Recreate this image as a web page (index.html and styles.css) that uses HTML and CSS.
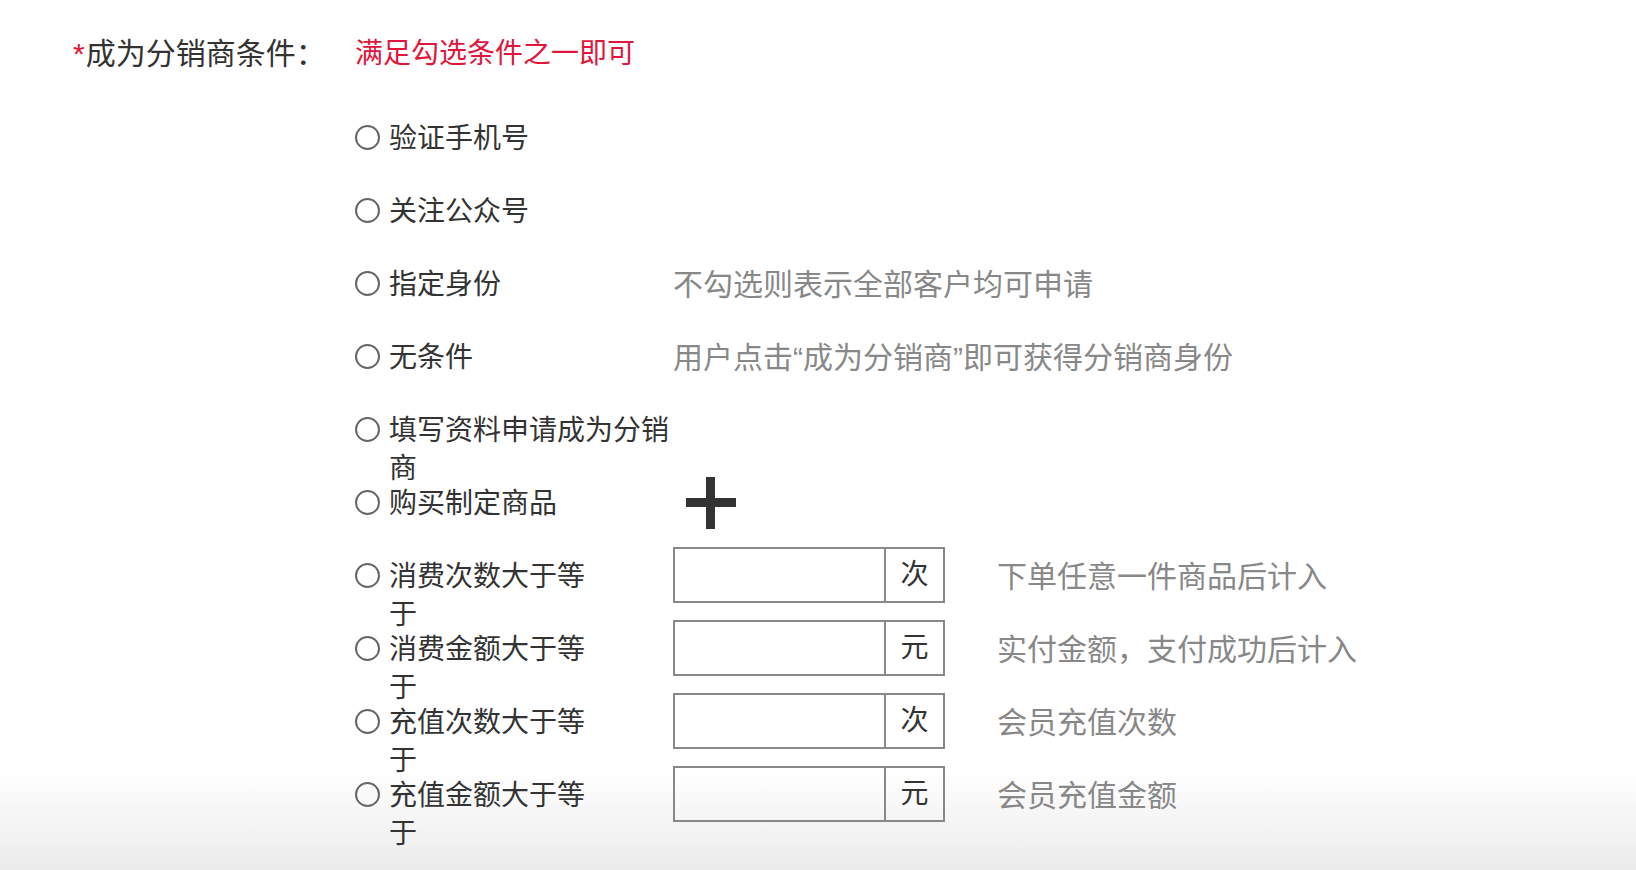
FILE: index.html
```html
<!DOCTYPE html>
<html lang="zh-CN">
<head>
  <meta charset="UTF-8">
  <meta name="viewport" content="width=device-width, initial-scale=1.0">
  <title>分销商条件</title>
  <link rel="stylesheet" href="styles.css">
</head>
<body>
  <div class="form">
    <!-- Title row -->
    <div class="form-head">
      <div class="form-label"><span class="required">*</span>成为分销商条件：</div>
      <div class="form-tip">满足勾选条件之一即可</div>
    </div>

    <!-- Condition list -->
    <div class="cond-list">
      <div class="cond-row">
        <div class="cond-opt"><span class="radio"></span><span class="cond-text">验证手机号</span></div>
      </div>
      <div class="cond-row">
        <div class="cond-opt"><span class="radio"></span><span class="cond-text">关注公众号</span></div>
      </div>
      <div class="cond-row">
        <div class="cond-opt"><span class="radio"></span><span class="cond-text">指定身份</span></div>
        <div class="cond-desc">不勾选则表示全部客户均可申请</div>
      </div>
      <div class="cond-row">
        <div class="cond-opt"><span class="radio"></span><span class="cond-text">无条件</span></div>
        <div class="cond-desc">用户点击“成为分销商”即可获得分销商身份</div>
      </div>
      <div class="cond-row">
        <div class="cond-opt"><span class="radio"></span><span class="cond-text">填写资料申请成为分销商</span></div>
      </div>
      <div class="cond-row">
        <div class="cond-opt"><span class="radio"></span><span class="cond-text">购买制定商品</span></div>
        <div class="add-btn">
          <svg width="50" height="52" viewBox="0 0 50 52">
            <rect x="0" y="21" width="50" height="9" fill="#333"/>
            <rect x="20" y="0" width="9" height="52" fill="#333"/>
          </svg>
        </div>
      </div>
      <div class="cond-row">
        <div class="cond-opt"><span class="radio"></span><span class="cond-text narrow">消费次数大于等于</span></div>
        <div class="input-group"><span class="input-field"></span><span class="input-unit">次</span></div>
        <div class="cond-desc far">下单任意一件商品后计入</div>
      </div>
      <div class="cond-row">
        <div class="cond-opt"><span class="radio"></span><span class="cond-text narrow">消费金额大于等于</span></div>
        <div class="input-group"><span class="input-field"></span><span class="input-unit">元</span></div>
        <div class="cond-desc far">实付金额，支付成功后计入</div>
      </div>
      <div class="cond-row">
        <div class="cond-opt"><span class="radio"></span><span class="cond-text narrow">充值次数大于等于</span></div>
        <div class="input-group"><span class="input-field"></span><span class="input-unit">次</span></div>
        <div class="cond-desc far">会员充值次数</div>
      </div>
      <div class="cond-row">
        <div class="cond-opt"><span class="radio"></span><span class="cond-text narrow">充值金额大于等于</span></div>
        <div class="input-group"><span class="input-field"></span><span class="input-unit">元</span></div>
        <div class="cond-desc far">会员充值金额</div>
      </div>
    </div>
  </div>
</body>
</html>
```

FILE: styles.css
```css
body {
  margin: 0;
  padding: 0;
  height: 100vh;
  overflow: hidden;
  color: #333;
  font-family: "Liberation Sans", "Noto Sans CJK SC", sans-serif;
  font-size: 28px;
  /* soft grey fade along the page bottom */
  background: #fff linear-gradient(rgba(235, 235, 235, 0), #ebebeb) no-repeat bottom / 100% 100px;
}

.form {
  padding-top: 35px;
}

/* Title row */
.form-head {
  display: flex;
  align-items: center;
  line-height: 38px;
}

.form-label {
  width: 282px;
  padding-left: 73px;
  font-size: 30px;
  white-space: nowrap;
}

.required {
  color: #e0163c;
  margin-right: 1px;
}

.form-tip {
  color: #e0163c;
}

/* Condition rows */
.cond-list {
  margin-top: 28px;
  padding-left: 355px;
}

.cond-row {
  display: flex;
  align-items: flex-start;
  height: 73px;
  padding-top: 19px;
  box-sizing: border-box;
}

.cond-opt {
  display: flex;
  align-items: flex-start;
  width: 318px;
  flex-shrink: 0;
  line-height: 38px;
}

.radio {
  width: 21px;
  height: 21px;
  border: 2px solid #666;
  border-radius: 50%;
  margin-top: 5px;
  margin-right: 9px;
  flex-shrink: 0;
}

.cond-text {
  width: 284px;
}

.cond-text.narrow {
  width: 205px;
}

.cond-desc {
  color: #888;
  font-size: 30px;
  line-height: 38px;
  white-space: nowrap;
}

.cond-desc.far {
  margin-left: 52px;
}

.add-btn {
  margin-left: 13px;
  margin-top: -8px;
  line-height: 0;
}

/* Input with unit */
.input-group {
  display: flex;
  width: 272px;
  height: 56px;
  margin-top: -11px;
  border: 2px solid #888;
  box-sizing: border-box;
}

.input-field {
  flex: 1;
}

.input-unit {
  width: 57px;
  border-left: 2px solid #888;
  text-align: center;
  line-height: 52px;
  color: #333;
}
```
